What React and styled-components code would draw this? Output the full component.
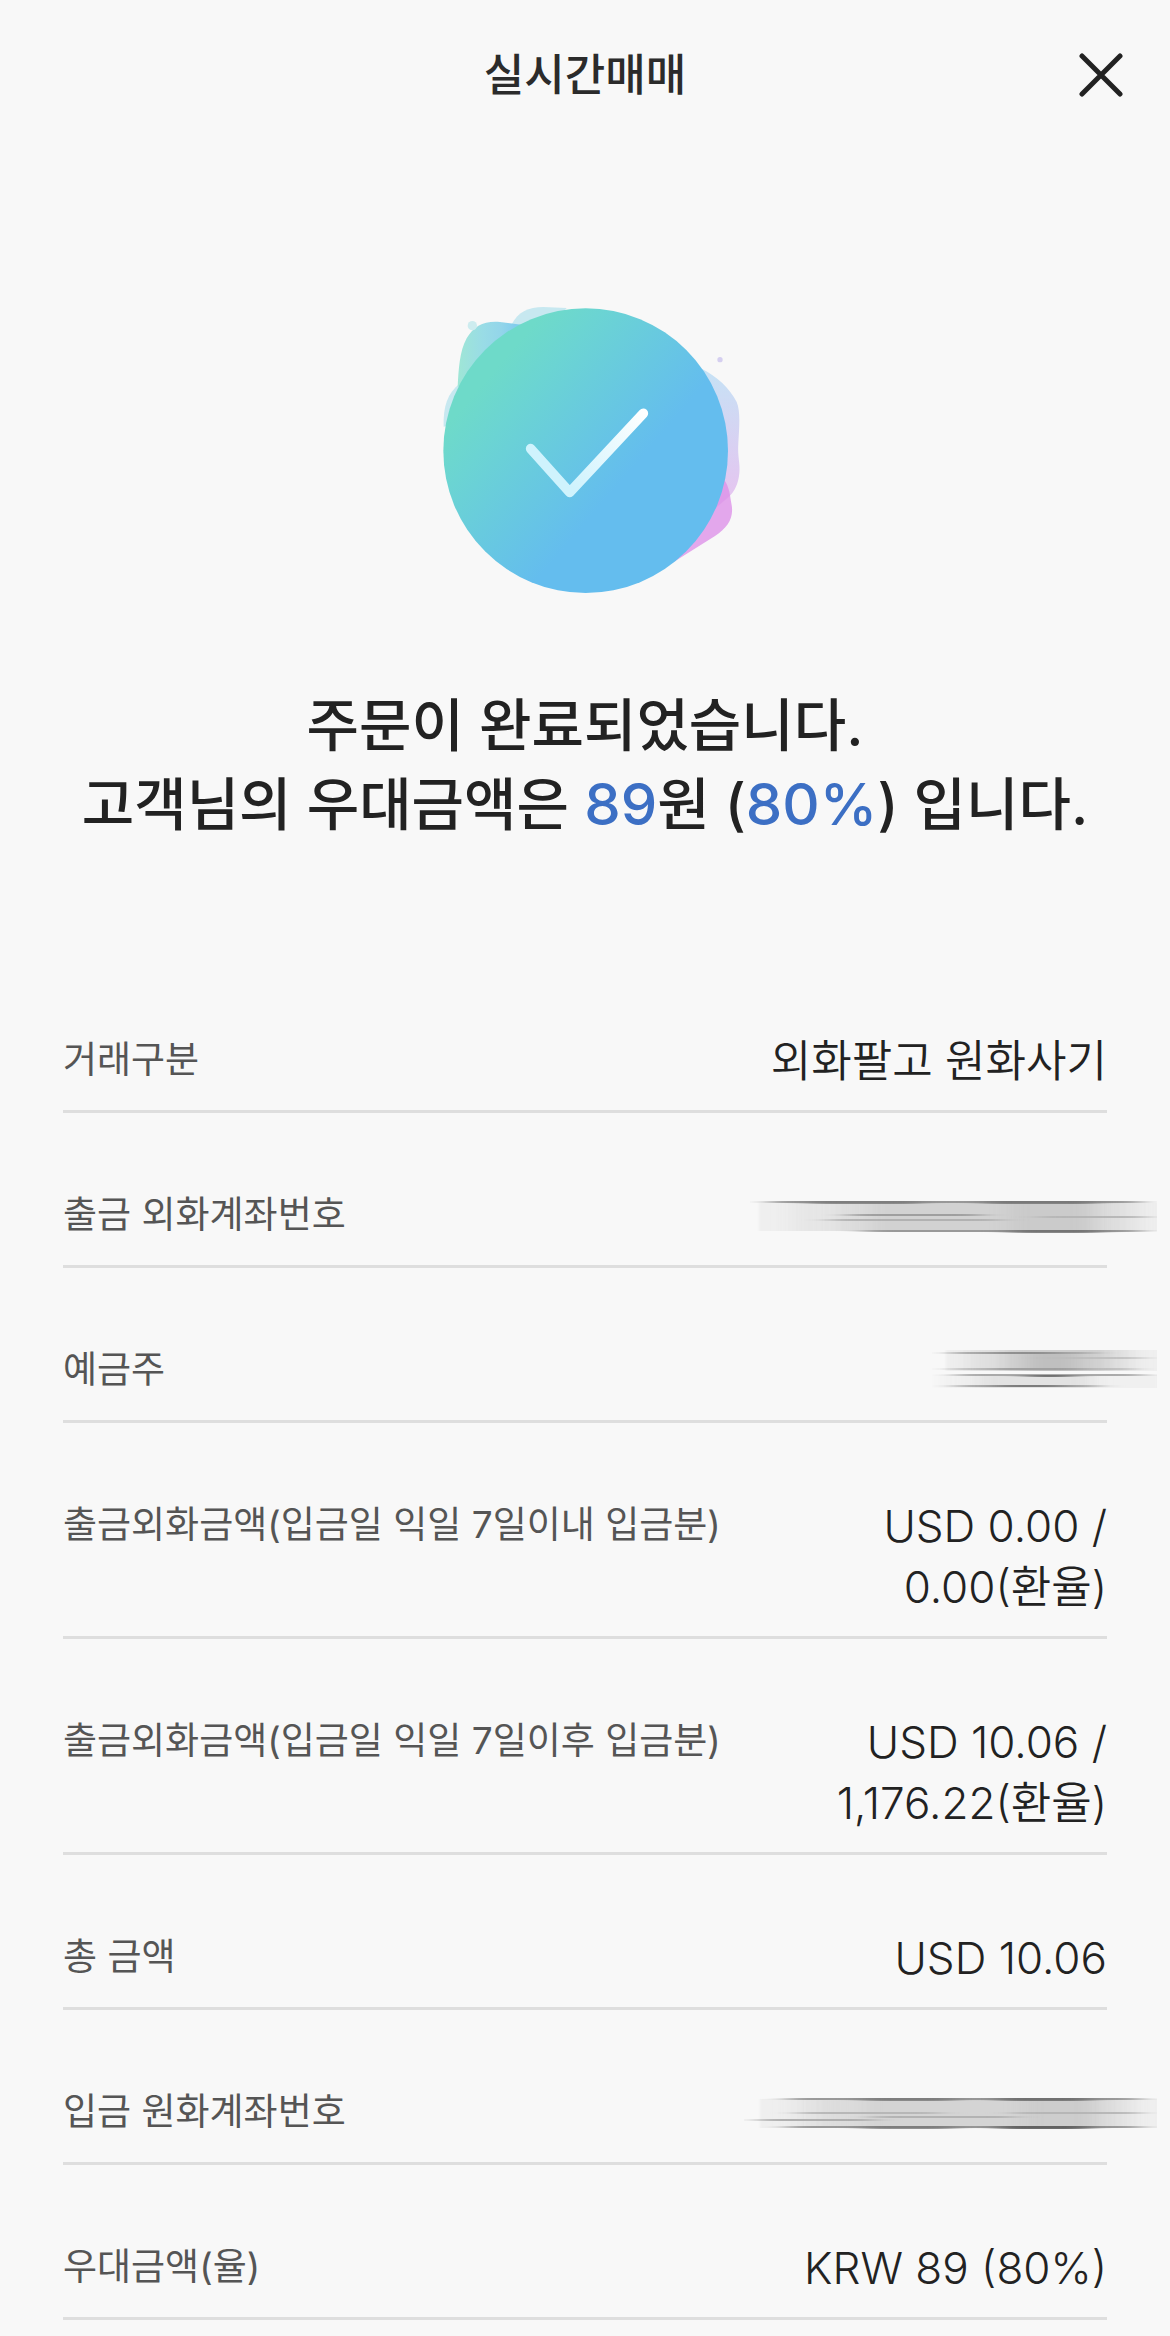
import React from 'react';
import styled, { createGlobalStyle } from 'styled-components';

const GlobalStyle = createGlobalStyle`
  * {
    box-sizing: border-box;
  }
  body {
    margin: 0;
    background-color: #f8f8f8;
    color: #222;
    font-family: Inter, "Noto Sans CJK KR", sans-serif;
  }
`;

const Header = styled.header`
  display: grid;
  grid-template-columns: 1fr auto 1fr;
  align-items: center;
  height: 150px;
  padding: 0 47px;
`;

const Title = styled.h1`
  grid-column: 2;
  margin: 0;
  font-size: 44px;
  font-weight: 500;
  line-height: 62px;
  color: #2b2b2b;
`;

const CloseButton = styled.button`
  justify-self: end;
  display: flex;
  padding: 0;
  border: 0;
  background: none;
  color: #222;
  cursor: pointer;
`;

const Complete = styled.section`
  display: flex;
  flex-direction: column;
  align-items: center;
  padding: 130px 40px 0;
`;

const Message = styled.h2`
  margin: 67px 0 0;
  font-size: 57px;
  font-weight: 500;
  line-height: 78px;
  text-align: center;
  word-break: keep-all;
`;

const Point = styled.span`
  font-size: 58px;
  color: #3c6fc4;
`;

const List = styled.dl`
  margin: 114px 63px 0;
`;

const Row = styled.div`
  display: flex;
  padding: 71px 0 18px;
  border-bottom: 3px solid #dedede;
`;

const Label = styled.dt`
  flex: 1;
  font-size: 37px;
  line-height: 61px;
  color: #555;
  word-break: keep-all;
`;

const Value = styled.dd`
  max-width: 36%;
  min-height: 63px;
  margin: 0;
  padding-top: 2px;
  font-size: 44px;
  font-weight: 350;
  line-height: 61px;
  text-align: right;
  word-break: keep-all;
`;

const Masked = styled.svg`
  display: block;
  margin: ${({ $top }) => $top}px -50px 0 0;
`;

const CloseIcon = () => (
  <svg width="44" height="44" viewBox="0 0 44 44" fill="none" stroke="currentColor" strokeWidth="5" strokeLinecap="round">
    <path d="M3 3L41 41M41 3L3 41" />
  </svg>
);

const CompleteIcon = () => (
  <svg width="370" height="340" viewBox="0 0 1110 1020" fill="none">
    <defs>
      <linearGradient id="disc" gradientUnits="userSpaceOnUse" x1="270" y1="285" x2="655" y2="615">
        <stop offset="0" stopColor="#6edac9" />
        <stop offset="0.25" stopColor="#6bd4d3" />
        <stop offset="1" stopColor="#64bdee" />
      </linearGradient>
      <linearGradient id="leaf" gradientUnits="userSpaceOnUse" x1="175" y1="200" x2="360" y2="200">
        <stop offset="0" stopColor="#9fe6d6" />
        <stop offset="0.4" stopColor="#99dce6" />
        <stop offset="0.7" stopColor="#93d5ea" />
        <stop offset="1" stopColor="#7ccaee" />
      </linearGradient>
      <linearGradient id="side" gradientUnits="userSpaceOnUse" x1="960" y1="270" x2="960" y2="650">
        <stop offset="0" stopColor="#c6e2f5" />
        <stop offset="1" stopColor="#e5c5f0" />
      </linearGradient>
      <linearGradient id="tick" gradientUnits="userSpaceOnUse" x1="735" y1="395" x2="500" y2="600">
        <stop offset="0" stopColor="#fff" />
        <stop offset="1" stopColor="#cff3fd" />
      </linearGradient>
    </defs>
    <path d="M335 133C355 95 385 82 430 81L500 84L420 180Z" fill="#c7e8f0" />
    <path d="M180 310C142 340 129 380 131 440L180 430Z" fill="#c7e8f0" />
    <path d="M173 320C176 270 178 215 200 175C222 138 252 122 300 126L370 135L300 300Z" fill="url(#leaf)" />
    <circle cx="217" cy="137" r="14" fill="#cdecef" />
    <circle cx="960" cy="239" r="8" fill="#d5cff0" />
    <path d="M905 266C950 288 990 325 1010 366C1022 395 1018 440 1015 490C1012 530 1021 550 1018 580C1015 610 1005 635 985 652L940 690L860 500Z" fill="url(#side)" />
    <path d="M973 600C988 622 990 645 994 670C1003 712 985 742 945 768L815 850L860 740Z" fill="#dc8fe8" fillOpacity="0.78" />
    <circle cx="557" cy="512" r="427" fill="url(#disc)" />
    <path d="M392 506L509 637L730 400" stroke="url(#tick)" strokeWidth="29" strokeLinecap="round" strokeLinejoin="round" />
  </svg>
);

// [x, y, width, height, shade, opacity]
const masks = {
  withdraw: {
    top: 15,
    width: 407,
    height: 32,
    fills: [
      [9, 2, 420, 28, '#efefef', 1],
      [42, 2, 350, 28, '#e6e6e6', 1],
      [88, 2, 285, 28, '#dcdcdc', 1],
      [120, 2, 225, 28, '#d0d0d0', 0.8],
      [260, 2, 80, 28, '#c4c4c4', 0.5],
    ],
    lines: [
      [20, 0, 370, 2, '#999', 1],
      [60, 0, 110, 3, '#777', 0.8],
      [235, 0, 110, 3, '#707070', 0.8],
      [100, 13, 130, 2, '#999', 0.9],
      [80, 18, 170, 2, '#aaa', 0.8],
      [290, 15, 105, 2, '#b4b4b4', 0.9],
      [115, 29, 275, 2, '#999', 1],
      [260, 29, 90, 3, '#6c6c6c', 0.8],
    ],
  },
  holder: {
    top: 8,
    width: 225,
    height: 40,
    fills: [
      [14, 1, 230, 21, '#efefef', 1],
      [10, 26, 235, 13, '#f0f0f0', 1],
      [35, 1, 165, 21, '#e0e0e0', 1],
      [45, 26, 115, 13, '#e2e2e2', 1],
      [70, 1, 105, 21, '#cecece', 1],
      [95, 5, 50, 17, '#bcbcbc', 0.8],
    ],
    lines: [
      [20, 3, 140, 2, '#aaa', 1],
      [60, 3, 65, 2, '#888', 0.8],
      [115, 8, 95, 2, '#bbb', 0.8],
      [20, 19, 180, 2, '#bbb', 0.9],
      [60, 19, 90, 2, '#999', 0.8],
      [25, 25, 185, 2, '#aaa', 1],
      [95, 26, 45, 2, '#666', 0.9],
      [25, 36, 140, 2, '#aaa', 1],
      [65, 36, 65, 2, '#777', 0.9],
    ],
  },
  deposit: {
    top: 15,
    width: 413,
    height: 32,
    fills: [
      [16, 1, 420, 29, '#efefef', 1],
      [50, 1, 340, 29, '#e5e5e5', 1],
      [75, 1, 300, 29, '#dcdcdc', 1],
      [120, 1, 230, 29, '#d0d0d0', 0.7],
      [280, 1, 70, 29, '#c6c6c6', 0.5],
    ],
    lines: [
      [45, 0, 350, 2, '#999', 1],
      [120, 0, 90, 3, '#777', 0.8],
      [255, 0, 90, 3, '#666', 0.8],
      [55, 14, 140, 2, '#b4b4b4', 0.9],
      [270, 14, 125, 2, '#b4b4b4', 0.9],
      [15, 21, 115, 2, '#aaa', 0.9],
      [130, 18, 140, 2, '#aaa', 0.8],
      [45, 28, 350, 2, '#999', 1],
      [120, 28, 90, 3, '#777', 0.8],
      [255, 28, 90, 3, '#5c5c5c', 0.9],
    ],
  },
};

const MaskedValue = ({ name }) => {
  const { top, width, height, fills, lines } = masks[name];

  const rects = (items) =>
    items.map(([x, y, w, h, fill, opacity], i) => (
      <rect key={i} x={x} y={y} width={w} height={h} fill={fill} opacity={opacity} />
    ));

  const region = {
    filterUnits: 'userSpaceOnUse',
    colorInterpolationFilters: 'sRGB',
    x: -40,
    y: -5,
    width: width + 80,
    height: height + 10,
  };

  return (
    <Masked $top={top} width={width} height={height} viewBox={`0 0 ${width} ${height}`} aria-hidden="true">
      <defs>
        <filter id={`${name}-base`} {...region}>
          <feGaussianBlur stdDeviation="1 0.4" />
        </filter>
        <filter id={`${name}-fill`} {...region}>
          <feGaussianBlur stdDeviation="9 0.4" />
        </filter>
        <filter id={`${name}-line`} {...region}>
          <feGaussianBlur stdDeviation="12 0.6" />
        </filter>
      </defs>
      <g filter={`url(#${name}-base)`}>{rects(fills.slice(0, 1))}</g>
      {fills.slice(1).map((fill, i) => (
        <g key={i} filter={`url(#${name}-fill)`}>{rects([fill])}</g>
      ))}
      {lines.map((line, i) => (
        <g key={i} filter={`url(#${name}-line)`}>{rects([line])}</g>
      ))}
    </Masked>
  );
};

const rows = [
  { label: '거래구분', value: '외화팔고 원화사기' },
  { label: '출금 외화계좌번호', mask: 'withdraw' },
  { label: '예금주', mask: 'holder' },
  { label: '출금외화금액(입금일 익일 7일이내 입금분)', value: 'USD 0.00 / 0.00(환율)' },
  { label: '출금외화금액(입금일 익일 7일이후 입금분)', value: 'USD 10.06 / 1,176.22(환율)' },
  { label: '총 금액', value: 'USD 10.06' },
  { label: '입금 원화계좌번호', mask: 'deposit' },
  { label: '우대금액(율)', value: 'KRW 89 (80%)' },
];

const App = () => {
  return (
    <>
      <GlobalStyle />
      <Header>
        <Title>실시간매매</Title>
        <CloseButton type="button" aria-label="닫기">
          <CloseIcon />
        </CloseButton>
      </Header>
      <main>
        <Complete>
          <CompleteIcon />
          <Message>
            주문이 완료되었습니다.
            <br />
            고객님의 우대금액은 <Point>89</Point>원 (<Point>80%</Point>) 입니다.
          </Message>
        </Complete>
        <List>
          {rows.map(({ label, value, mask }) => (
            <Row key={label}>
              <Label>{label}</Label>
              <Value>{mask ? <MaskedValue name={mask} /> : value}</Value>
            </Row>
          ))}
        </List>
      </main>
    </>
  );
};

export default App;
